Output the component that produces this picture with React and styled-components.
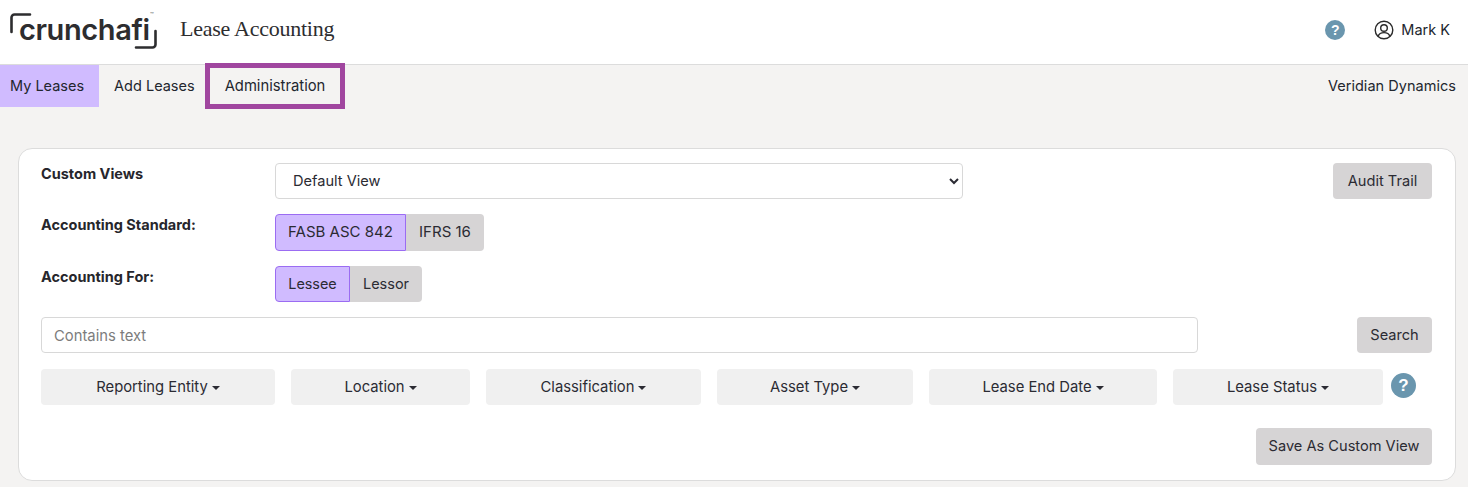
import React from 'react';
import styled, { createGlobalStyle } from 'styled-components';

const GlobalStyle = createGlobalStyle`
  html, body {
    margin: 0;
    padding: 0;
    background: #f4f3f2;
    color: #2b2b33;
    font-family: "Inter", "Liberation Sans", sans-serif;
    font-size: 15px;
  }
  * { box-sizing: border-box; }
`;

const Header = styled.header`
  height: 65px;
  background: #fff;
  border-bottom: 1px solid #dcdcdc;
  display: flex;
  align-items: center;
  justify-content: space-between;
  padding: 0 18px 5px 10px;
`;

const Brand = styled.div`
  display: flex;
  align-items: center;
`;

const Logo = styled.div`
  position: relative;
  width: 148px;
  height: 38px;
  margin-right: 22px;
`;

const LogoMarks = styled.svg`
  position: absolute;
  inset: 0;
`;

const LogoText = styled.span`
  position: absolute;
  left: 9px;
  top: 1px;
  font-family: "Inter", "Liberation Sans", sans-serif;
  font-size: 29px;
  line-height: 36px;
  font-weight: 600;
  letter-spacing: -0.4px;
  color: #2d2d2f;
`;

const Trademark = styled.span`
  position: absolute;
  left: 140px;
  top: 0;
  font-size: 6px;
  line-height: 8px;
  color: #555;
`;

const AppName = styled.div`
  margin-top: -2px;
  font-family: "Liberation Serif", serif;
  font-size: 22px;
  letter-spacing: -0.25px;
  color: #2d2d2f;
`;

const UserArea = styled.div`
  display: flex;
  align-items: center;
  color: #22262e;
`;

const HelpDot = styled.span`
  width: ${p => p.$size}px;
  height: ${p => p.$size}px;
  border-radius: 50%;
  background: #6a96ae;
  color: #fff;
  font-family: "Liberation Sans", sans-serif;
  font-weight: 700;
  font-size: ${p => Math.round(p.$size * 0.68)}px;
  display: flex;
  align-items: center;
  justify-content: center;
  flex: none;
`;

const UserName = styled.span`
  margin-left: 7px;
  font-size: 14.5px;
`;

const UserIconWrap = styled.span`
  display: flex;
  margin-left: 29px;
`;

const NavBar = styled.nav`
  height: 42px;
  display: flex;
  align-items: stretch;
  justify-content: space-between;
  padding-right: 12px;
`;

const NavLinks = styled.div`
  display: flex;
  align-items: stretch;
`;

const NavLink = styled.a`
  display: flex;
  align-items: center;
  padding: 0 15px 2px ${p => (p.$active ? 10 : 15)}px;
  background: ${p => (p.$active ? '#d0bbff' : 'transparent')};
  color: #22262e;
  font-size: 14.5px;
`;

const HighlightedLink = styled(NavLink)`
  height: 46px;
  margin-top: -2px;
  margin-left: -5px;
  padding: 0 15px 1px;
  border: 5px solid #a0469f;
  font-size: 14.8px;
`;

const Company = styled.div`
  display: flex;
  align-items: center;
  padding-bottom: 2px;
  font-size: 14.5px;
  letter-spacing: 0.03px;
  color: #22262e;
`;

const Card = styled.section`
  margin: 41px 12px 0 18px;
  height: 333px;
  background: #fff;
  border: 1px solid #dcdcdc;
  border-radius: 14px;
  padding: 14px 23px 0 22px;
  display: flex;
  flex-direction: column;
`;

const Row = styled.div`
  display: flex;
  align-items: flex-start;
  justify-content: space-between;
  height: ${p => p.$height}px;
  margin-bottom: ${p => p.$gap}px;
`;

const Left = styled.div`
  display: flex;
  align-items: flex-start;
`;

const Label = styled.label`
  width: 234px;
  padding-top: 1px;
  font-weight: 700;
  font-size: 14.5px;
  line-height: 20px;
  color: #26262c;
`;

const SelectBox = styled.select`
  width: 688px;
  height: 36px;
  padding: 0 13px 1px;
  background: #fff;
  border: 1px solid #d8d8d8;
  border-radius: 4px;
  font: inherit;
  font-size: 14.6px;
  color: #2b2b33;
`;

const GreyButton = styled.button`
  width: ${p => p.$width}px;
  height: ${p => p.$height || 36}px;
  padding: 0 0 1px;
  border: none;
  border-radius: 4px;
  background: #d6d4d5;
  color: #2b2b33;
  font: inherit;
  font-size: 14.6px;
`;

const Segments = styled.div`
  display: flex;
`;

const Segment = styled.button`
  width: ${p => p.$width}px;
  height: ${p => p.$height}px;
  padding: 0 0 2px;
  border: ${p => (p.$on ? '1px solid #9b6cf2' : 'none')};
  border-radius: ${p => (p.$on ? '4px 0 0 4px' : '0 4px 4px 0')};
  background: ${p => (p.$on ? '#d0bbff' : '#d6d4d5')};
  color: #2b2b33;
  font: inherit;
  font-size: ${p => p.$size}px;
`;

const SearchInput = styled.input`
  width: 1157px;
  height: 36px;
  padding: 1px 12px 0;
  border: 1px solid #d8d8d8;
  border-radius: 4px;
  font: inherit;
  font-size: 14.8px;
  &::placeholder { color: #7c7c7c; opacity: 1; }
`;

const Filters = styled.div`
  display: grid;
  grid-template-columns: 234px 179px 215px 196px 228px 210px 25px;
  column-gap: 16px;
  align-items: center;
  height: 36px;
  margin-bottom: 23px;
`;

const FilterButton = styled.button`
  height: 36px;
  padding: 0 0 1px;
  border: none;
  border-radius: 4px;
  background: #f0f0f0;
  color: #2b2b33;
  font: inherit;
  font-size: 14.8px;
  display: flex;
  align-items: center;
  justify-content: center;
`;

const Caret = styled.span`
  width: 0;
  height: 0;
  margin-left: 4px;
  margin-top: 2px;
  border-top: 4px solid #2b2b33;
  border-left: 4px solid transparent;
  border-right: 4px solid transparent;
`;

const FilterHelp = styled.div`
  margin-left: -8px;
  margin-bottom: 3px;
`;

const Footer = styled.div`
  display: flex;
  justify-content: flex-end;
`;

const filters = ['Reporting Entity', 'Location', 'Classification', 'Asset Type', 'Lease End Date', 'Lease Status'];

function UserIcon() {
  return (
    <svg width="20" height="20" viewBox="0 0 20 20" fill="none" stroke="#2a2a2a" strokeWidth="1.4">
      <circle cx="10" cy="10" r="8.8" />
      <circle cx="10" cy="8" r="3.3" />
      <path d="M4.2 16.2c.8-2.6 3-3.6 5.8-3.6s5 1 5.8 3.6" />
    </svg>
  );
}

function App() {
  return (
    <>
      <GlobalStyle />
      <Header>
        <Brand>
          <Logo>
            <LogoMarks width="148" height="38" viewBox="0 0 148 38" fill="none" stroke="#2d2d2f" strokeWidth="2.6" strokeLinecap="round">
              <path d="M1.5 21V6.5a3 3 0 0 1 3-3H20" />
              <path d="M145.5 20v13.5a3 3 0 0 1-3 3H126" />
            </LogoMarks>
            <LogoText>crunchafi</LogoText>
            <Trademark>™</Trademark>
          </Logo>
          <AppName>Lease Accounting</AppName>
        </Brand>
        <UserArea>
          <HelpDot $size={20}>?</HelpDot>
          <UserIconWrap><UserIcon /></UserIconWrap>
          <UserName>Mark K</UserName>
        </UserArea>
      </Header>
      <NavBar>
        <NavLinks>
          <NavLink $active>My Leases</NavLink>
          <NavLink>Add Leases</NavLink>
          <HighlightedLink>Administration</HighlightedLink>
        </NavLinks>
        <Company>Veridian Dynamics</Company>
      </NavBar>
      <Card>
        <Row $height={36} $gap={15}>
          <Left>
            <Label>Custom Views</Label>
            <SelectBox defaultValue="Default View">
              <option>Default View</option>
            </SelectBox>
          </Left>
          <GreyButton $width={99}>Audit Trail</GreyButton>
        </Row>
        <Row $height={37} $gap={15}>
          <Left>
            <Label>Accounting Standard:</Label>
            <Segments>
              <Segment $on $height={37} $width={131} $size={15}>FASB ASC 842</Segment>
              <Segment $height={37} $width={78} $size={15}>IFRS 16</Segment>
            </Segments>
          </Left>
        </Row>
        <Row $height={36} $gap={15}>
          <Left>
            <Label>Accounting For:</Label>
            <Segments>
              <Segment $on $height={36} $width={75} $size={14.4}>Lessee</Segment>
              <Segment $height={36} $width={72} $size={14.5}>Lessor</Segment>
            </Segments>
          </Left>
        </Row>
        <Row $height={36} $gap={16}>
          <SearchInput placeholder="Contains text" />
          <GreyButton $width={75}>Search</GreyButton>
        </Row>
        <Filters>
          {filters.map(name => (
            <FilterButton key={name}>{name}<Caret /></FilterButton>
          ))}
          <FilterHelp><HelpDot $size={25}>?</HelpDot></FilterHelp>
        </Filters>
        <Footer>
          <GreyButton $width={176} $height={37}>Save As Custom View</GreyButton>
        </Footer>
      </Card>
    </>
  );
}

export default App;
